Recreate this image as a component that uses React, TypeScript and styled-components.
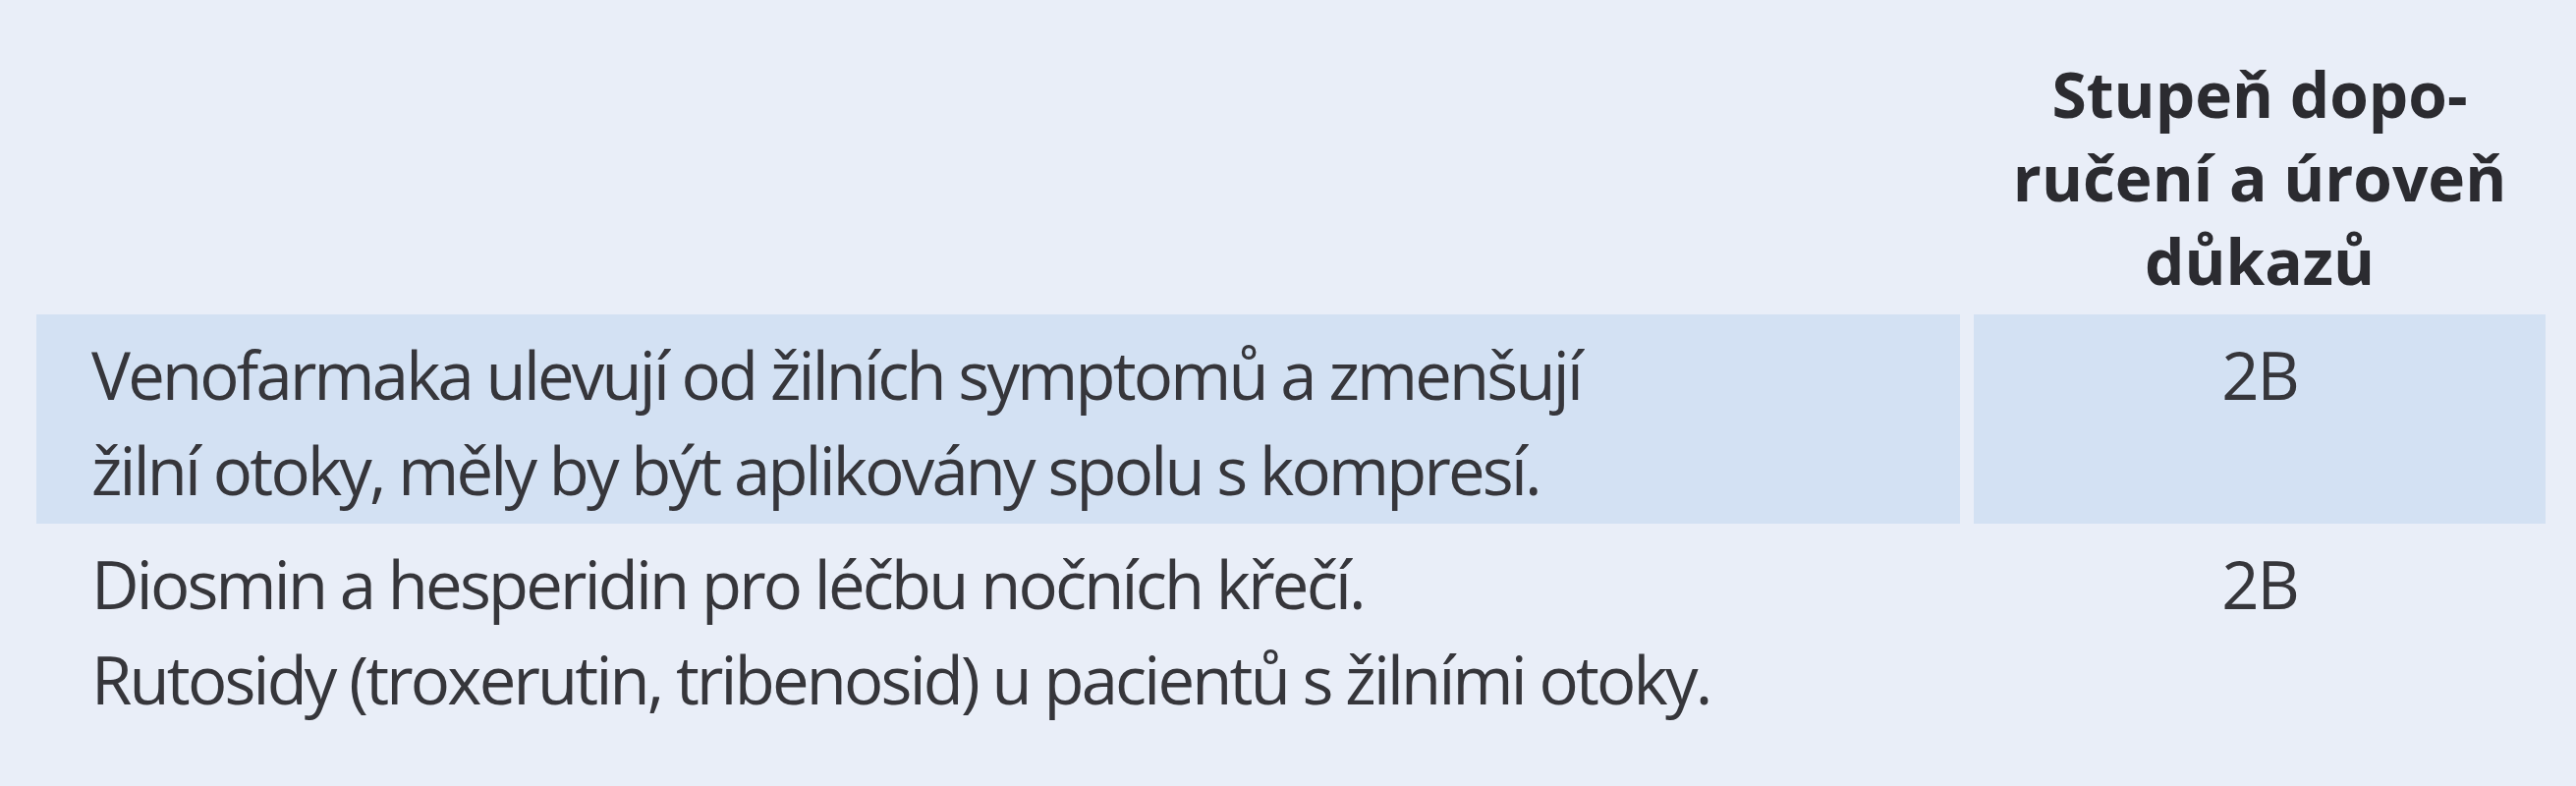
import React from 'react';
import styled, { createGlobalStyle } from 'styled-components';

const GlobalStyle = createGlobalStyle`
  html, body {
    margin: 0;
    padding: 0;
    background: #e9eef8;
  }
  body {
    font-family: "Open Sans", "DejaVu Sans Condensed", sans-serif;
    font-stretch: 90%;
    color: #36363b;
  }
`;

interface Recommendation {
  text: string[];
  grade: string;
  highlighted?: boolean;
}

const rows: Recommendation[] = [
  {
    text: [
      'Venofarmaka ulevují od žilních symptomů a zmenšují',
      'žilní otoky, měly by být aplikovány spolu s kompresí.',
    ],
    grade: '2B',
    highlighted: true,
  },
  {
    text: [
      'Diosmin a hesperidin pro léčbu nočních křečí.',
      'Rutosidy (troxerutin, tribenosid) u pacientů s žilními otoky.',
    ],
    grade: '2B',
  },
];

const App = () => {
  return (
    <Page>
      <GlobalStyle />
      <Table>
        <HeaderBlank />
        <HeaderCell>
          Stupeň dopo-
          <br />
          ručení a úroveň
          <br />
          důkazů
        </HeaderCell>
        {rows.map((row, i) => (
          <React.Fragment key={i}>
            <TextCell $highlighted={row.highlighted}>
              {row.text.map((line, j) => (
                <Line key={j}>{line}</Line>
              ))}
            </TextCell>
            <GradeCell $highlighted={row.highlighted}>{row.grade}</GradeCell>
          </React.Fragment>
        ))}
      </Table>
    </Page>
  );
};

export default App;

const Page = styled.div`
  width: 2622px;
  height: 800px;
  background: #e9eef8;
  overflow: hidden;
`;

const Table = styled.div`
  display: grid;
  grid-template-columns: 1958px 582px;
  column-gap: 14px;
  padding-left: 37px;
`;

const HeaderBlank = styled.div``;

const HeaderCell = styled.div`
  padding: 53px 0 12px;
  text-align: center;
  font-weight: 700;
  font-stretch: 96%;
  font-size: 64px;
  line-height: 85px;
  color: #2b2b30;
`;

const TextCell = styled.div<{ $highlighted?: boolean }>`
  padding: 13px 0 6px 56px;
  font-size: 67px;
  font-weight: 370;
  letter-spacing: -2.8px;
  line-height: 97px;
  background: ${(p) => (p.$highlighted ? '#d3e1f3' : 'transparent')};
`;

const Line = styled.div`
  white-space: nowrap;
`;

const GradeCell = styled.div<{ $highlighted?: boolean }>`
  padding: 13px 0 6px;
  text-align: center;
  font-size: 67px;
  font-weight: 370;
  letter-spacing: -2px;
  line-height: 97px;
  background: ${(p) => (p.$highlighted ? '#d3e1f3' : 'transparent')};
`;
